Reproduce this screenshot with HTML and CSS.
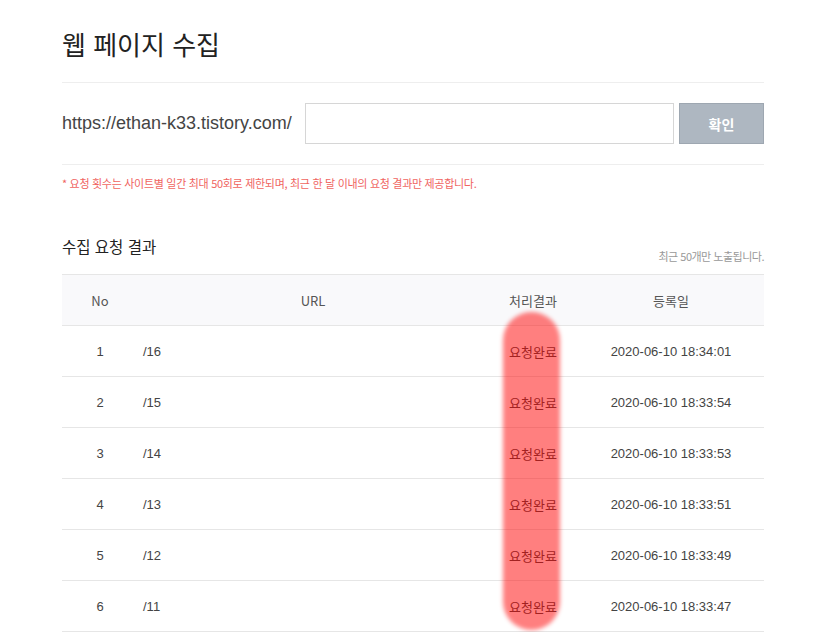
FILE: index.html
```html
<!DOCTYPE html>
<html lang="ko">
<head>
  <meta charset="UTF-8">
  <title>웹 페이지 수집</title>
  <link rel="stylesheet" href="styles.css">
</head>
<body>
  <div class="wrap">
    <h1 class="page-title">웹 페이지 수집</h1>

    <form class="collect-form">
      <span class="base-url">https://ethan-k33.tistory.com/</span>
      <input type="text" class="path-input">
      <button type="submit" class="btn-ok">확인</button>
    </form>

    <p class="notice">* 요청 횟수는 사이트별 일간 최대 50회로 제한되며, 최근 한 달 이내의 요청 결과만 제공합니다.</p>

    <div class="result-head">
      <h2>수집 요청 결과</h2>
      <span class="limit">최근 50개만 노출됩니다.</span>
    </div>

    <div class="table-box">
      <table class="result-table">
        <colgroup>
          <col class="c-no"><col class="c-url"><col class="c-state"><col class="c-date">
        </colgroup>
        <thead>
          <tr><th>No</th><th>URL</th><th>처리결과</th><th>등록일</th></tr>
        </thead>
        <tbody>
          <tr><td>1</td><td class="url">/16</td><td>요청완료</td><td>2020-06-10 18:34:01</td></tr>
          <tr><td>2</td><td class="url">/15</td><td>요청완료</td><td>2020-06-10 18:33:54</td></tr>
          <tr><td>3</td><td class="url">/14</td><td>요청완료</td><td>2020-06-10 18:33:53</td></tr>
          <tr><td>4</td><td class="url">/13</td><td>요청완료</td><td>2020-06-10 18:33:51</td></tr>
          <tr><td>5</td><td class="url">/12</td><td>요청완료</td><td>2020-06-10 18:33:49</td></tr>
          <tr><td>6</td><td class="url">/11</td><td>요청완료</td><td>2020-06-10 18:33:47</td></tr>
        </tbody>
      </table>
      <!-- highlight drawn over the status column -->
      <div class="marker"></div>
    </div>
  </div>
</body>
</html>
```

FILE: styles.css
```css
body {
  margin: 0;
  font-family: "Liberation Sans", "Noto Sans CJK KR", sans-serif;
  color: #333;
  background: #fff;
}

.wrap {
  width: 702px;
  padding: 29px 0 0 62px;
}

.page-title {
  margin: 0;
  padding-bottom: 19px;
  font-size: 26px;
  font-weight: normal;
  line-height: 34px;
  color: #222;
  border-bottom: 1px solid #eee;
}

.collect-form {
  display: flex;
  align-items: center;
  padding: 20px 0;
  border-bottom: 1px solid #eee;
}

.base-url {
  font-size: 18px;
  color: #444;
  margin-right: 13px;
}

.path-input {
  flex: 1;
  height: 41px;
  box-sizing: border-box;
  border: 1px solid #d6d6d6;
  margin: 0;
}

.btn-ok {
  width: 85px;
  height: 41px;
  margin-left: 5px;
  background-color: #aeb7c1;
  border: 1px solid #9ea7b1;
  color: #fff;
  font-family: "Noto Sans CJK KR", sans-serif;
  font-size: 14px;
  font-weight: bold;
}

.notice {
  margin: 10px 0 0;
  font-family: "Noto Sans CJK KR", sans-serif;
  font-size: 11px;
  letter-spacing: -0.3px;
  color: #f0645f;
}

.result-head {
  display: flex;
  justify-content: space-between;
  align-items: flex-end;
  margin-top: 44px;
  padding-bottom: 10px;
}

.result-head h2 {
  margin: 0 0 7px;
  font-family: "Noto Sans CJK KR", sans-serif;
  font-size: 15.5px;
  font-weight: normal;
  color: #222;
}

.limit {
  font-family: "Noto Sans CJK KR", sans-serif;
  font-size: 11px;
  letter-spacing: -0.5px;
  color: #999;
}

.table-box {
  position: relative;
}

.result-table {
  width: 100%;
  border-collapse: collapse;
  table-layout: fixed;
  border-top: 1px solid #e6e6e6;
  font-size: 13px;
}

.c-no { width: 76px; }
.c-url { width: 350px; }
.c-state { width: 90px; }
.c-date { width: 186px; }

.result-table th {
  height: 48px;
  background: #f9f9fb;
  font-weight: normal;
  color: #555;
  font-family: "Noto Sans CJK KR", sans-serif;
  border-bottom: 1px solid #e6e6e6;
}

.result-table td {
  height: 50px;
  padding: 0;
  text-align: center;
  color: #444;
  border-bottom: 1px solid #e6e6e6;
}

.result-table td.url {
  text-align: left;
  padding-left: 5px;
}

.marker {
  position: absolute;
  left: 441px;
  top: 38px;
  width: 57px;
  height: 318px;
  border-radius: 29px;
  background: rgba(255, 0, 0, 0.5);
  filter: blur(2px);
}
```
